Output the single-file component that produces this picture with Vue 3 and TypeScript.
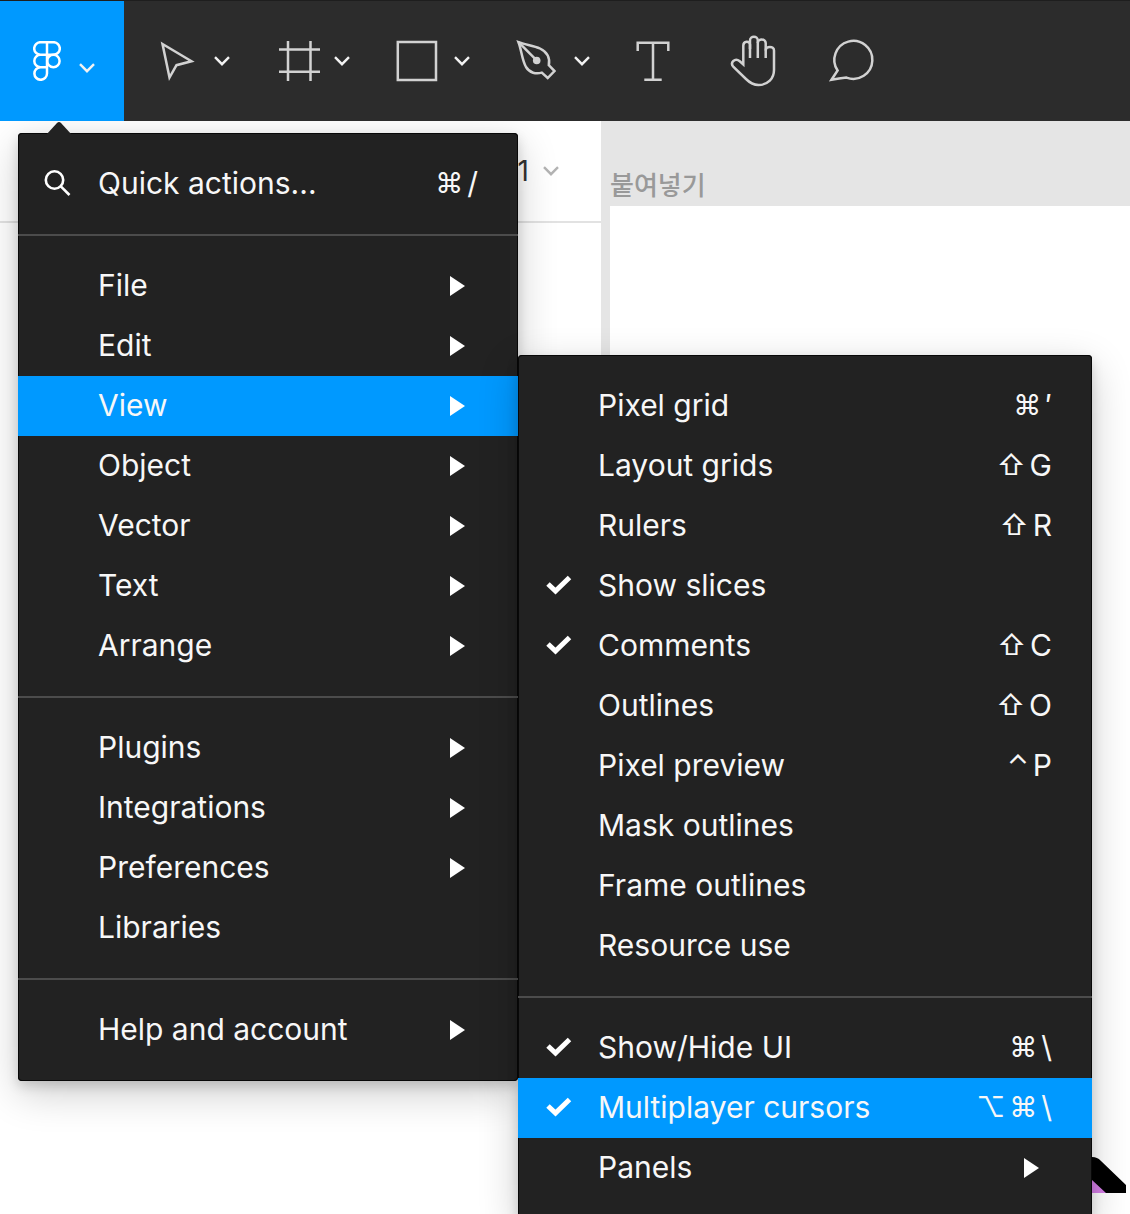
<script setup lang="ts">
interface MenuItem {
  label: string
  keys?: string[]
  arrow?: boolean
  checked?: boolean
  active?: boolean
}

interface Tool {
  name: string
  menu: boolean
  shapes: string[]
  dot?: boolean
}

const tools: Tool[] = [
  { name: 'Move', menu: true, shapes: ['M14.5 13L43.5 30.3L28.5 34.2L21.5 46.5Z'] },
  { name: 'Frame', menu: true, shapes: ['M20 10V50M42.5 10V50M11 18.5H52M11 40.8H52'] },
  { name: 'Rectangle', menu: true, shapes: ['M9.8 11H48V49H9.8Z'] },
  {
    name: 'Pen',
    menu: true,
    dot: true,
    shapes: [
      'M10.5 11.2C17 13.8 26 14.5 32 17.5C40 21.5 42 28 40.8 34.2L46.5 40L39.7 47L33.8 41.6C28 43.5 21.5 41.8 18 36C14 29 13.5 19 10.5 11.2Z',
      'M10.5 11.2L28.7 29.3',
    ],
  },
  { name: 'Text', menu: false, shapes: ['M13.7 20V11.7H44.3V20M29 11.7V48.7M20.3 48.7H37.7'] },
  {
    name: 'Hand',
    menu: false,
    shapes: [
      'M26 27V13.5C26 9.8 19.3 9.8 19.3 14.5V33.5L15.8 30.3C11 26.5 5.5 31.5 9.5 36L22 48C26 52 29.5 54 34.5 54C44 54 50 47.5 50 39V19.5C50 14.8 41.7 14.8 41.7 19.5',
      'M26 18V9.5C26 4.6 33.8 4.6 33.8 9.5V27',
      'M33.8 12C33.8 7.4 41.7 7.4 41.7 12V27',
    ],
  },
  {
    name: 'Comment',
    menu: false,
    shapes: ['M7.5 48.8L13.6 39.5A19 19 0 1 1 22.5 46.6Q15 47.3 7.5 48.8Z'],
  },
]

const modifiers = ['⌘', '⇧', '⌥', '⌃']

const mainGroups: MenuItem[][] = [
  [
    { label: 'File', arrow: true },
    { label: 'Edit', arrow: true },
    { label: 'View', arrow: true, active: true },
    { label: 'Object', arrow: true },
    { label: 'Vector', arrow: true },
    { label: 'Text', arrow: true },
    { label: 'Arrange', arrow: true },
  ],
  [
    { label: 'Plugins', arrow: true },
    { label: 'Integrations', arrow: true },
    { label: 'Preferences', arrow: true },
    { label: 'Libraries' },
  ],
  [{ label: 'Help and account', arrow: true }],
]

const viewGroups: MenuItem[][] = [
  [
    { label: 'Pixel grid', keys: ['⌘', '′'] },
    { label: 'Layout grids', keys: ['⇧', 'G'] },
    { label: 'Rulers', keys: ['⇧', 'R'] },
    { label: 'Show slices', checked: true },
    { label: 'Comments', checked: true, keys: ['⇧', 'C'] },
    { label: 'Outlines', keys: ['⇧', 'O'] },
    { label: 'Pixel preview', keys: ['⌃', 'P'] },
    { label: 'Mask outlines' },
    { label: 'Frame outlines' },
    { label: 'Resource use' },
  ],
  [
    { label: 'Show/Hide UI', checked: true, keys: ['⌘', '\\'] },
    { label: 'Multiplayer cursors', checked: true, active: true, keys: ['⌥', '⌘', '\\'] },
    { label: 'Panels', arrow: true },
  ],
]
</script>

<template>
  <div class="app">
    <header class="toolbar">
      <button class="logo" type="button" aria-label="Main menu">
        <svg width="28" height="40" viewBox="0 0 28 40" class="line-icon">
          <path d="M14 1.2H7.5a6.3 6.3 0 0 0 0 12.6H14zM14 1.2H20.5a6.3 6.3 0 0 1 0 12.6H14zM14 13.8H7.5a6.2 6.2 0 0 0 0 12.4H14zM14 26.2H7.5a6.3 6.3 0 1 0 6.5 6.3z" />
          <circle cx="20.4" cy="20" r="6.2" />
        </svg>
        <svg class="chevron low" width="16" height="10" viewBox="0 0 16 10"><path d="M1 1.2L8 8.2L15 1.2" /></svg>
      </button>
      <button
        v-for="tool in tools"
        :key="tool.name"
        type="button"
        class="tool"
        :class="{ single: !tool.menu }"
        :aria-label="tool.name"
      >
        <svg width="60" height="60" viewBox="0 0 60 60" class="line-icon">
          <path v-for="d in tool.shapes" :key="d" :d="d" />
          <circle v-if="tool.dot" class="dot" cx="28.7" cy="29.5" r="3.8" />
        </svg>
        <svg v-if="tool.menu" class="chevron" width="16" height="10" viewBox="0 0 16 10"><path d="M1 1.2L8 8.2L15 1.2" /></svg>
      </button>
    </header>

    <main class="workspace">
      <aside class="panel">
        <button class="page-picker" type="button">
          <span>1</span>
          <svg class="chevron" width="16" height="10" viewBox="0 0 16 10"><path d="M1 1.2L8 8.2L15 1.2" /></svg>
        </button>
      </aside>
      <section class="canvas">
        <h2 class="frame-name">붙여넣기</h2>
        <div class="frame">
          <svg class="artwork" width="36" height="36" viewBox="0 0 36 36">
            <path d="M0 22L16 36H0Z" fill="#d67fe8" />
            <path d="M0 0C4 0 6 1 9 4L34 28V36H14L0 23Z" fill="#000" />
          </svg>
        </div>
      </section>

      <nav class="menu main-menu" aria-label="Main">
        <svg class="pointer" width="26" height="13" viewBox="0 0 26 13"><path d="M0 13L11 1Q13 -1 15 1L26 13Z" fill="#222" /></svg>
        <ul class="group">
          <li>
            <button class="row" type="button">
              <svg class="mark search" width="27" height="27" viewBox="0 0 27 27">
                <circle cx="10.5" cy="10" r="8.7" />
                <path d="M16.8 16.3L25.5 25" />
              </svg>
              <span class="label">Quick actions...</span>
              <kbd class="keys"><span class="modifier">⌘</span><span>/</span></kbd>
            </button>
          </li>
        </ul>
        <ul v-for="(group, g) in mainGroups" :key="g" class="group">
          <li v-for="item in group" :key="item.label" class="entry">
            <button class="row" :class="{ active: item.active }" type="button">
              <span class="label">{{ item.label }}</span>
              <svg v-if="item.arrow" class="arrow" width="15" height="22" viewBox="0 0 15 22"><path d="M0 2L15 12L0 22Z" /></svg>
            </button>
            <div v-if="item.active" class="menu submenu">
              <ul v-for="(sub, s) in viewGroups" :key="s" class="group">
                <li v-for="entry in sub" :key="entry.label">
                  <button class="row" :class="{ active: entry.active }" type="button">
                    <svg v-if="entry.checked" class="mark check" width="26" height="20" viewBox="0 0 26 20">
                      <path d="M2 9L9.5 16L23.5 2.5" />
                    </svg>
                    <span class="label">{{ entry.label }}</span>
                    <kbd v-if="entry.keys" class="keys">
                      <span v-for="k in entry.keys" :key="k" :class="{ modifier: modifiers.includes(k) }">{{ k }}</span>
                    </kbd>
                    <svg v-if="entry.arrow" class="arrow" width="15" height="22" viewBox="0 0 15 22"><path d="M0 2L15 12L0 22Z" /></svg>
                  </button>
                </li>
              </ul>
            </div>
          </li>
        </ul>
      </nav>
    </main>
  </div>
</template>

<style>
body {
  margin: 0;
}
</style>

<style scoped>
.app {
  display: flex;
  flex-direction: column;
  height: 100vh;
  overflow: hidden;
  background: #fff;
  font-family: Inter, "Noto Sans CJK KR", sans-serif;
}

button {
  border: 0;
  margin: 0;
  padding: 0;
  background: none;
  color: inherit;
  font: inherit;
  text-align: left;
}

svg {
  display: block;
  flex: none;
}

.toolbar {
  position: relative;
  z-index: 2;
  display: flex;
  flex: none;
  height: 120px;
  border-top: 1px solid #1e1e1e;
  background: #2c2c2c;
  color: #d2d2d2;
}

.logo {
  display: flex;
  align-items: center;
  gap: 18px;
  width: 124px;
  padding-left: 33px;
  box-sizing: border-box;
  background: #0099ff;
  color: #fff;
}

.tool {
  display: flex;
  align-items: center;
  gap: 6px;
  width: 120px;
  padding-left: 24px;
  box-sizing: border-box;
}

.tool.single {
  width: 100px;
  padding-left: 20px;
}

.line-icon {
  fill: none;
  stroke: currentColor;
  stroke-width: 2.5;
}

.line-icon .dot {
  fill: currentColor;
  stroke: none;
}

.chevron {
  fill: none;
  stroke: #f2f2f2;
  stroke-width: 2.4;
}

.chevron.low {
  margin-top: 14px;
}

.workspace {
  position: relative;
  display: flex;
  flex: 1;
}

.panel {
  flex: none;
  width: 601px;
  background: #fff;
}

.page-picker {
  display: flex;
  align-items: center;
  justify-content: flex-end;
  gap: 14px;
  width: 100%;
  height: 102px;
  padding-right: 42px;
  border-bottom: 2px solid #e2e2e2;
  box-sizing: border-box;
  color: #333;
  font-size: 28px;
}

.page-picker .chevron {
  stroke: #b3b3b3;
}

.canvas {
  display: flex;
  flex: 1;
  flex-direction: column;
  padding-left: 9px;
  background: #e5e5e5;
}

.frame-name {
  height: 37px;
  margin: 0;
  padding-top: 48px;
  color: #999;
  font-size: 26px;
  font-weight: 500;
  line-height: 34px;
}

.frame {
  position: relative;
  flex: 1;
  background: #fff;
}

.artwork {
  position: absolute;
  right: 2px;
  bottom: 21px;
}

.menu {
  position: absolute;
  padding: 1px 0;
  box-sizing: border-box;
  border-radius: 4px;
  background: #222;
  box-shadow:
    inset 0 0 0 1px #080808,
    0 5px 12px rgba(0, 0, 0, 0.15),
    0 12px 40px rgba(0, 0, 0, 0.2);
  color: #f7f7f7;
  font-size: 30px;
}

.main-menu {
  top: 12px;
  left: 18px;
  width: 500px;
}

.submenu {
  top: -21px;
  left: 100%;
  width: 574px;
  z-index: 1;
}

.pointer {
  position: absolute;
  top: -11px;
  left: 28px;
}

.group {
  margin: 0;
  padding: 20px 0;
  list-style: none;
}

.group + .group {
  border-top: 2px solid #4c4c4c;
}

.entry {
  position: relative;
}

.row {
  position: relative;
  display: flex;
  align-items: center;
  justify-content: space-between;
  width: 100%;
  height: 60px;
  padding: 0 40px 2px 80px;
  box-sizing: border-box;
}

.row.active {
  background: #0099ff;
}

.arrow {
  margin-right: 13px;
  fill: #fff;
}

.mark {
  position: absolute;
  left: 28px;
  fill: none;
  stroke: #fff;
}

.search {
  left: 26px;
  stroke-width: 2.6;
}

.check {
  stroke-width: 5;
}

.keys {
  display: flex;
  align-items: center;
  gap: 4px;
  font: inherit;
}

.modifier {
  font-size: 28px;
}
</style>
